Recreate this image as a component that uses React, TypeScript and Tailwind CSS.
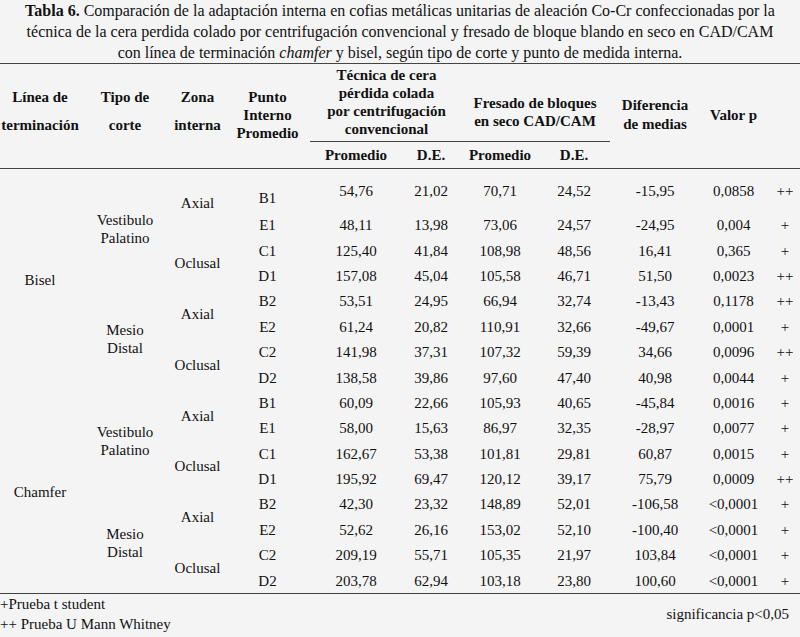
import React from "react";

const rows: string[][] = [
  ["B1", "54,76", "21,02", "70,71", "24,52", "-15,95", "0,0858", "++"],
  ["E1", "48,11", "13,98", "73,06", "24,57", "-24,95", "0,004", "+"],
  ["C1", "125,40", "41,84", "108,98", "48,56", "16,41", "0,365", "+"],
  ["D1", "157,08", "45,04", "105,58", "46,71", "51,50", "0,0023", "++"],
  ["B2", "53,51", "24,95", "66,94", "32,74", "-13,43", "0,1178", "++"],
  ["E2", "61,24", "20,82", "110,91", "32,66", "-49,67", "0,0001", "+"],
  ["C2", "141,98", "37,31", "107,32", "59,39", "34,66", "0,0096", "++"],
  ["D2", "138,58", "39,86", "97,60", "47,40", "40,98", "0,0044", "+"],
  ["B1", "60,09", "22,66", "105,93", "40,65", "-45,84", "0,0016", "+"],
  ["E1", "58,00", "15,63", "86,97", "32,35", "-28,97", "0,0077", "+"],
  ["C1", "162,67", "53,38", "101,81", "29,81", "60,87", "0,0015", "+"],
  ["D1", "195,92", "69,47", "120,12", "39,17", "75,79", "0,0009", "++"],
  ["B2", "42,30", "23,32", "148,89", "52,01", "-106,58", "<0,0001", "+"],
  ["E2", "52,62", "26,16", "153,02", "52,10", "-100,40", "<0,0001", "+"],
  ["C2", "209,19", "55,71", "105,35", "21,97", "103,84", "<0,0001", "+"],
  ["D2", "203,78", "62,94", "103,18", "23,80", "100,60", "<0,0001", "+"],
];

const pad = ["", "pl-[5px]", "", "", "pl-[3px]", "pl-[3px]", "", ""];
const serif = "font-['Liberation_Serif','Times_New_Roman',serif]";

export default function App() {
  return (
    <div className={"w-[800px] h-[637px] bg-[#f4f4f4] text-[#111] overflow-hidden " + serif}>
      <div className="h-[63px] text-center text-[16px] leading-[21px] whitespace-nowrap">
        <b>Tabla 6.</b> Comparación de la adaptación interna en cofias metálicas unitarias de aleación Co-Cr confeccionadas por la
        <br />
        técnica de la cera perdida colado por centrifugación convencional y fresado de bloque blando en seco en CAD/CAM
        <br />
        con línea de terminación <i>chamfer</i> y bisel, según tipo de corte y punto de medida interna.
      </div>
      <table
        className={
          "w-[800px] table-fixed border-separate border-spacing-0 border-t border-[#444] text-center text-[#111] " +
          serif
        }
      >
        <colgroup>
          <col className="w-[80px]" />
          <col className="w-[90px]" />
          <col className="w-[55px]" />
          <col className="w-[85px]" />
          <col className="w-[87px]" />
          <col className="w-[68px]" />
          <col className="w-[70px]" />
          <col className="w-[75px]" />
          <col className="w-[87px]" />
          <col className="w-[73px]" />
          <col className="w-[30px]" />
        </colgroup>
        <thead className={"font-bold text-[15px] whitespace-nowrap " + serif}>
          <tr className="h-[78px]">
            <th rowSpan={2} className={"align-top p-0 pt-[19px] leading-[28px] border-b border-[#444] " + serif}>
              Línea de<br />terminación
            </th>
            <th rowSpan={2} className={"align-top p-0 pt-[19px] leading-[28px] border-b border-[#444] " + serif}>
              Tipo de<br />corte
            </th>
            <th rowSpan={2} className={"align-top p-0 pt-[19px] leading-[28px] border-b border-[#444] " + serif}>
              Zona<br />interna
            </th>
            <th rowSpan={2} className={"align-top p-0 pt-[24px] leading-[18px] border-b border-[#444] " + serif}>
              Punto<br />Interno<br />Promedio
            </th>
            <th colSpan={2} className={"align-top p-0 pt-[2px] pr-[2px] leading-[18px] border-b border-[#444] " + serif}>
              Técnica de cera<br />pérdida colada<br />por centrifugación<br />convencional
            </th>
            <th colSpan={2} className={"align-top p-0 pt-[30px] pr-[5px] leading-[18px] border-b border-[#444] " + serif}>
              Fresado de bloques<br />en seco CAD/CAM
            </th>
            <th rowSpan={2} className={"align-top p-0 pt-[32px] pl-[3px] leading-[19px] border-b border-[#444] " + serif}>
              Diferencia<br />de medias
            </th>
            <th rowSpan={2} className={"align-top p-0 pt-[42px] leading-[18px] border-b border-[#444] " + serif}>
              Valor p
            </th>
            <th rowSpan={2} className="p-0 border-b border-[#444]"></th>
          </tr>
          <tr className="h-[27px]">
            <th className={"p-0 pl-[5px] leading-[20px] border-b border-[#444] " + serif}>Promedio</th>
            <th className={"p-0 leading-[20px] border-b border-[#444] " + serif}>D.E.</th>
            <th className={"p-0 leading-[20px] border-b border-[#444] " + serif}>Promedio</th>
            <th className={"p-0 pl-[3px] leading-[20px] border-b border-[#444] " + serif}>D.E.</th>
          </tr>
        </thead>
        <tbody className={"text-[15px] leading-[20px] whitespace-nowrap font-normal " + serif}>
          {rows.map((r, i) => (
            <tr key={i} className={i === 0 ? "h-[43.5px]" : "h-[25.4px]"}>
              {i % 8 === 0 && (
                <td rowSpan={8} className={"p-0 " + serif}>
                  {i === 0 ? "Bisel" : "Chamfer"}
                </td>
              )}
              {i % 4 === 0 && (
                <td rowSpan={4} className={"p-0 leading-[18px] " + serif}>
                  {i % 8 === 0 ? (
                    <>
                      Vestibulo
                      <br />
                      Palatino
                    </>
                  ) : (
                    <>
                      Mesio
                      <br />
                      Distal
                    </>
                  )}
                </td>
              )}
              {i % 2 === 0 && (
                <td rowSpan={2} className={"p-0 " + serif}>
                  {i % 4 === 0 ? "Axial" : "Oclusal"}
                </td>
              )}
              {r.map((v, j) => (
                <td
                  key={j}
                  className={
                    "p-0 " +
                    serif +
                    " " +
                    pad[j] +
                    (i === 0 && j === 0 ? " align-top pt-[19px]" : "")
                  }
                >
                  {v}
                </td>
              ))}
            </tr>
          ))}
        </tbody>
      </table>
      <div className="border-t border-[#444] flex items-center justify-between text-[15px] leading-[20px]">
        <div>
          <div>+Prueba t student</div>
          <div>++ Prueba U Mann Whitney</div>
        </div>
        <div className="pr-[11px]">significancia p&lt;0,05</div>
      </div>
    </div>
  );
}
